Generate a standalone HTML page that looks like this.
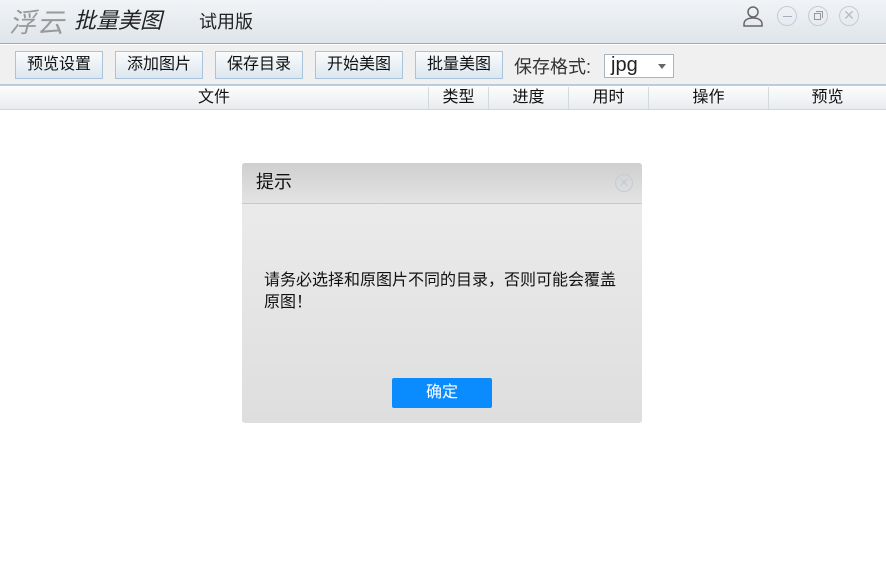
<!DOCTYPE html>
<html><head><meta charset="utf-8"><style>
*{margin:0;padding:0;box-sizing:border-box}
body{width:886px;height:588px;background:#fff;position:relative;overflow:hidden;font-family:"Liberation Sans","Noto Sans CJK SC",sans-serif;color:#111}
.title{position:absolute;left:0;top:0;width:886px;height:44px;background:linear-gradient(#f1f3f6,#dfe5eb);border-bottom:1px solid #a9a9a9}
.logo1{position:absolute;left:9px;top:1px;font-size:27px;font-style:italic;color:#999;letter-spacing:1px}
.logo2{position:absolute;left:74px;top:3px;font-size:22px;font-style:italic;color:#222}
.trial{position:absolute;left:199px;top:8px;font-size:18px;color:#222}
.tb{position:absolute;left:0;top:45px;width:886px;height:41px;background:#f0f0f0;border-bottom:2px solid #bccbdb}
.btn{position:absolute;top:6px;width:88px;height:28px;border:1px solid #a9c3dc;background:linear-gradient(#f9fbfc,#dce7ef);font-size:16px;text-align:center;line-height:26px}
.fmt{position:absolute;left:514px;top:8px;font-size:18px;color:#333}
.sel{position:absolute;left:604px;top:9px;width:70px;height:24px;border:1px solid #aab4be;background:#fff;font-size:20px;line-height:20px;padding-left:6px;color:#222}
.sel:after{content:"";position:absolute;right:7px;top:9px;border-left:4px solid transparent;border-right:4px solid transparent;border-top:5px solid #666}
.hdr{position:absolute;left:0;top:87px;width:886px;height:23px;background:linear-gradient(#fbfcfd,#e9ecef);border-bottom:1px solid #d2d6da}
.c{position:absolute;top:0;height:22px;line-height:22px;font-size:16px;text-align:center;border-right:1px solid #d6d9dc}
.dlg{position:absolute;left:242px;top:163px;width:400px;height:260px;border-radius:3px;background:linear-gradient(#ededed,#dedede);overflow:hidden}
.dh{height:41px;background:linear-gradient(#cfcfcf,#e3e3e3);border-bottom:1px solid #c8c8c8;font-size:18px;line-height:38px;padding-left:14px}
.x{position:absolute;right:9px;top:11px;width:18px;height:18px;border:1px solid #c3ccd6;border-radius:50%;color:#c3ccd6;font-size:13px;line-height:15px;text-align:center}
.msg{position:absolute;left:22px;top:107px;width:365px;font-size:16px;line-height:22px}
.ok{position:absolute;left:150px;top:215px;width:100px;height:30px;background:#0a8cff;border-radius:2px;color:#fff;font-size:16px;text-align:center;line-height:30px}
.ic{position:absolute;top:6px;width:20px;height:20px;border:1px solid #c6ccd2;border-radius:50%}
</style></head><body>
<div class="title">
<div class="logo1">浮云</div><div class="logo2">批量美图</div><div class="trial">试用版</div>
<svg style="position:absolute;left:743px;top:5px" width="20" height="22" viewBox="0 0 20 22"><circle cx="10" cy="7" r="5" fill="none" stroke="#666" stroke-width="1.5"/><path d="M1 21v-2c0-4 4-6 9-6s9 2 9 6v2z" fill="none" stroke="#666" stroke-width="1.5"/></svg>
<div class="ic" style="left:777px"><div style="position:absolute;left:5px;top:9px;width:9px;height:1px;background:#aab"></div></div>
<div class="ic" style="left:808px"><div style="position:absolute;left:5px;top:6px;width:7px;height:7px;border:1px solid #999"></div><div style="position:absolute;left:7px;top:4px;width:7px;height:7px;border-top:1px solid #999;border-right:1px solid #999"></div></div>
<div class="ic" style="left:839px;color:#bbb;font-size:14px;line-height:17px;text-align:center">✕</div>
</div>
<div class="tb">
<div class="btn" style="left:15px">预览设置</div>
<div class="btn" style="left:115px">添加图片</div>
<div class="btn" style="left:215px">保存目录</div>
<div class="btn" style="left:315px">开始美图</div>
<div class="btn" style="left:415px">批量美图</div>
<div class="fmt">保存格式:</div>
<div class="sel">jpg</div>
</div>
<div class="hdr">
<div class="c" style="left:0;width:429px">文件</div>
<div class="c" style="left:429px;width:60px">类型</div>
<div class="c" style="left:489px;width:80px">进度</div>
<div class="c" style="left:569px;width:80px">用时</div>
<div class="c" style="left:649px;width:120px">操作</div>
<div class="c" style="left:769px;width:117px;border:none">预览</div>
</div>
<div class="dlg">
<div class="dh">提示</div><div class="x">✕</div>
<div class="msg">请务必选择和原图片不同的目录，否则可能会覆盖<br>原图！</div>
<div class="ok">确定</div>
</div>
</body></html>
